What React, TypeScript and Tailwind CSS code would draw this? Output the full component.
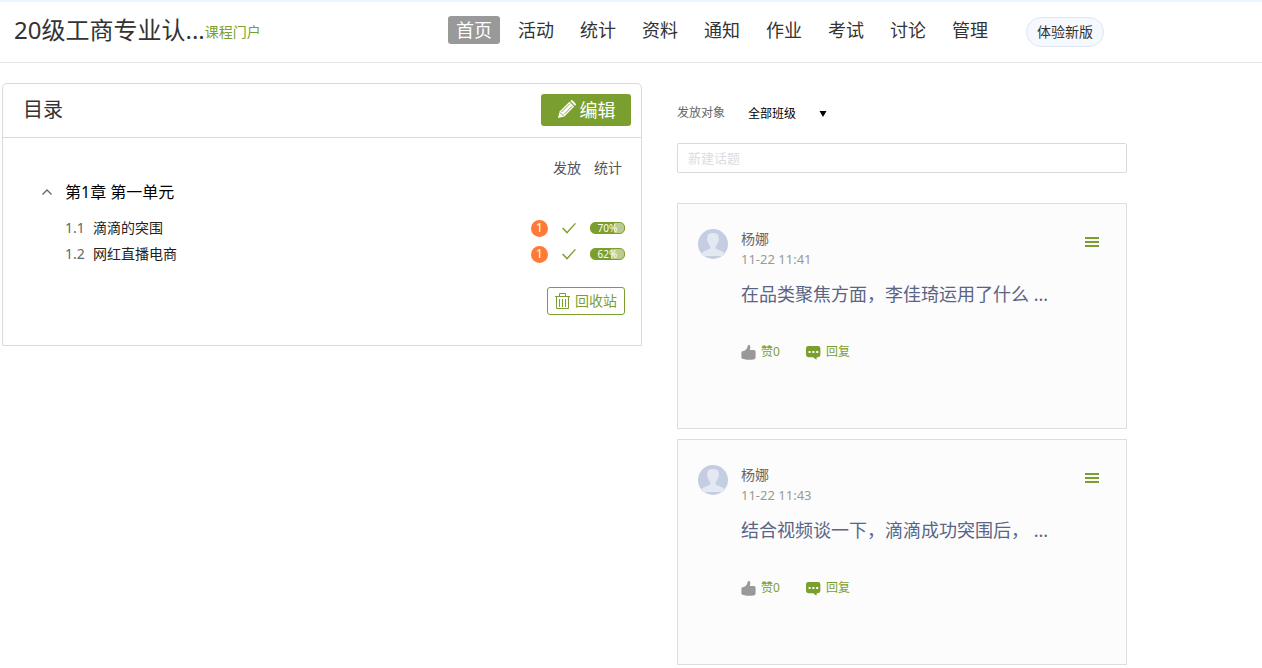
import React from "react";

const navItems = ["首页", "活动", "统计", "资料", "通知", "作业", "考试", "讨论", "管理"];

const lessons = [
  { no: "1.1", name: "滴滴的突围", tasks: 1, percent: 70 },
  { no: "1.2", name: "网红直播电商", tasks: 1, percent: 62 },
];

const topics = [
  {
    author: "杨娜",
    time: "11-22 11:41",
    title: "在品类聚焦方面，李佳琦运用了什么 ...",
    likes: 0,
  },
  {
    author: "杨娜",
    time: "11-22 11:43",
    title: "结合视频谈一下，滴滴成功突围后， ...",
    likes: 0,
  },
];

const PencilIcon = () => (
  <svg width="20" height="20" viewBox="0 0 20 20" aria-hidden="true">
    <path d="M1 18 L2.6 11.6 L12.4 1.8 L17.2 6.6 L7.4 16.4 Z" fill="#fff" />
    <path d="M13.3 .9 L14 .4 Q14.8 -.2 15.6 .5 L18.6 3.5 Q19.3 4.3 18.7 5.1 L18.1 5.7 Z" fill="#fff" />
    <path
      d="M4.6 12 L12.9 3.7 M7 14.4 L15.3 6.1 M3 12.4 L6.6 16"
      stroke="#7b9f2e"
      strokeWidth="0.9"
      fill="none"
    />
  </svg>
);

const TrashIcon = () => (
  <svg width="15" height="17" viewBox="0 0 15 17" fill="none" stroke="#7b9f2e" aria-hidden="true">
    <path d="M0 3.5 H15 M4.5 3.5 V.5 H10.5 V3.5 M1.5 3.5 V15.5 H13.5 V3.5 M4.5 6 V14 M7.5 6 V14 M10.5 6 V14" />
  </svg>
);

const Avatar = () => (
  <svg className="shrink-0" width="30" height="30" viewBox="0 0 30 30" aria-hidden="true">
    <circle cx="15" cy="15" r="15" fill="#c4cde1" />
    <path
      d="M15 4 C19.4 4 21 5.6 20.6 9.2 C21.4 9.8 20.9 12.4 20 13 C19.5 15 18.4 16.4 17.7 17.1 V19.4 C20 21 25.4 21.6 27 25.2 Q26 26.4 25 27 H5 Q4 26.4 3 25.2 C4.6 21.6 10 21 12.3 19.4 V17.1 C11.6 16.4 10.5 15 10 13 C9.1 12.4 8.6 9.8 9.4 9.2 C9 5.6 10.6 4 15 4 Z"
      fill="#e3e8f2"
    />
  </svg>
);

const ThumbIcon = () => (
  <svg width="15" height="15" viewBox="0 0 15 15" fill="#999" aria-hidden="true">
    <path d="M.4 7.4 Q.4 6.4 1.4 6.2 C4.4 5.8 6 4.4 6.6 1.2 C7 -.4 9 -.2 9.2 1.4 C9.4 2.8 9.1 4 8.8 5 H13 Q14.6 5.2 14.6 7 V12.4 Q14.6 14 12.6 14.4 C9.6 15 6.4 15 3.6 14.2 L1.4 13.8 Q.4 13.6 .4 12.6 Z" />
  </svg>
);

const ReplyIcon = () => (
  <svg width="15" height="15" viewBox="0 0 15 15" aria-hidden="true">
    <path
      d="M2.4 1 H12 Q14.4 1 14.4 3.4 V9.8 Q14.4 12.2 12 12.2 H10.8 L10.4 14.8 L7.2 12.2 H2.4 Q0 12.2 0 9.8 V3.4 Q0 1 2.4 1 Z"
      fill="#7b9f2e"
    />
    <path d="M2.6 6 H4.6 V8 H2.6 Z M6.4 6 H8.4 V8 H6.4 Z M10.2 6 H12.2 V8 H10.2 Z" fill="#fff" />
  </svg>
);

const Header = () => {
  return (
    <header className="flex h-[63px] items-start border-t-2 border-b border-t-[#eaf6ff] border-b-[#e3e3e3] pt-[14px]">
      <div className="flex w-[448px] shrink-0 items-center pl-[14px]">
        <h1 className="text-2xl leading-7 text-[#333]">20级工商专业认...</h1>
        <a href="#portal" className="pt-1 text-sm text-[#7b9f2e]">
          课程门户
        </a>
      </div>
      <nav className="flex shrink-0 gap-[10px]">
        {navItems.map((item, i) => (
          <a
            key={item}
            href="#nav"
            className={
              i === 0
                ? "rounded-[3px] bg-[#999] px-2 text-lg leading-7 text-white"
                : "px-2 text-lg leading-7 text-[#333]"
            }
          >
            {item}
          </a>
        ))}
      </nav>
      <button className="mt-px ml-[30px] h-[30px] shrink-0 rounded-full border border-[#dfe6f0] bg-[#f5f9ff] px-[10px] text-sm text-[#333]">
        体验新版
      </button>
    </header>
  );
};

const Catalog = () => {
  return (
    <section className="w-[640px] rounded-t-[5px] border border-[#dadada]">
      <div className="flex h-[54px] items-center justify-between border-b border-[#dadada] pr-[10px] pb-px pl-5">
        <h2 className="text-xl text-[#333]">目录</h2>
        <button className="flex h-8 w-[90px] items-center justify-center gap-[3px] rounded-[3px] bg-[#7b9f2e] text-lg text-white">
          <PencilIcon />
          编辑
        </button>
      </div>

      <div className="pt-5 pr-4 pb-[30px] pl-[38px]">
        <div className="flex justify-end gap-[13px] pr-[3px] text-sm text-[#555]">
          <span>发放</span>
          <span>统计</span>
        </div>

        <h3>
          <button className="flex h-7 items-center gap-3 text-base text-black">
            <svg width="12" height="8" viewBox="0 0 12 8" fill="none" stroke="#666" strokeWidth="1.3" aria-hidden="true">
              <path d="M1.5 6.5 L6 2 L10.5 6.5" />
            </svg>
            第1章 第一单元
          </button>
        </h3>

        <ul className="mt-[9px]">
          {lessons.map((lesson) => (
            <li key={lesson.no} className="flex h-[26px] items-center pl-6 text-sm">
              <span className="w-7 text-[#666]">{lesson.no}</span>
              <a href="#lesson" className="flex-1 text-[#222]">
                {lesson.name}
              </a>
              <span className="flex h-[17px] w-[17px] items-center justify-center rounded-full bg-[#ff7a38] text-xs text-white">
                {lesson.tasks}
              </span>
              <svg
                className="mx-[14px]"
                width="14"
                height="12"
                viewBox="0 0 14 12"
                fill="none"
                stroke="#7b9f2e"
                strokeWidth="1.4"
                aria-hidden="true"
              >
                <path d="M.6 6 L5 10.6 L13.4 1.4" />
              </svg>
              <span className="relative h-3 w-[35px] overflow-hidden rounded-[5px] border border-[#7b9f2e] bg-[#bccc91]">
                <span className="block h-full bg-[#7b9f2e]" style={{ width: `${lesson.percent}%` }} />
                <span className="absolute inset-0 text-center text-[10px] leading-[10px] text-white">
                  {lesson.percent}%
                </span>
              </span>
            </li>
          ))}
        </ul>

        <div className="mt-5 flex justify-end">
          <button className="flex h-7 items-center gap-[5px] rounded-[3px] border border-[#7b9f2e] px-[7px] text-sm text-[#7b9f2e]">
            <TrashIcon />
            回收站
          </button>
        </div>
      </div>
    </section>
  );
};

const Discussion = () => {
  return (
    <section className="w-[450px] pt-5">
      <div className="flex h-5 items-center text-xs">
        <label htmlFor="target" className="text-[#666]">
          发放对象
        </label>
        <div className="ml-[23px] flex items-center pt-[2px]">
          <select id="target" className="w-[71px] appearance-none text-black">
            <option>全部班级</option>
          </select>
          <svg width="8" height="6" viewBox="0 0 8 6" aria-hidden="true">
            <path d="M.5 0 H7.5 L4 6 Z" fill="#000" />
          </svg>
        </div>
      </div>

      <input
        type="text"
        aria-label="新建话题"
        placeholder="新建话题"
        className="mt-5 block h-[30px] w-full rounded-[2px] border border-[#dadada] px-[10px] text-[13px] placeholder:text-[#dcdce2]"
      />

      <div className="mt-[30px] flex flex-col gap-[10px]">
        {topics.map((topic) => (
          <article
            key={topic.time}
            className="flex h-[226px] items-start gap-[13px] border border-[#dedede] bg-[#fcfcfc] px-5 pt-[25px]"
          >
            <Avatar />
            <div className="min-w-0 flex-1">
              <p className="text-sm text-[#666]">{topic.author}</p>
              <p className="text-[13px] leading-5 text-[#999]">{topic.time}</p>
              <h3 className="mt-[11px] truncate text-lg text-[#5a6484]">{topic.title}</h3>
              <div className="mt-9 flex gap-[26px] text-xs text-[#7b9f2e]">
                <button className="flex items-center gap-[5px]">
                  <ThumbIcon />赞{topic.likes}
                </button>
                <button className="flex items-center gap-[5px]">
                  <ReplyIcon />
                  回复
                </button>
              </div>
            </div>
            <button aria-label="更多" className="mt-2 mr-[7px] flex w-[14px] flex-col gap-[2px]">
              <span className="h-[2px] w-full bg-[#7b9f2e]" />
              <span className="h-[2px] w-full bg-[#7b9f2e]" />
              <span className="h-[2px] w-full bg-[#7b9f2e]" />
            </button>
          </article>
        ))}
      </div>
    </section>
  );
};

export default function App() {
  return (
    <div className="bg-white font-['Noto_Sans','Noto_Sans_CJK_SC',sans-serif]">
      <Header />
      <main className="flex items-start gap-[35px] pt-5 pl-[2px]">
        <Catalog />
        <Discussion />
      </main>
    </div>
  );
}
